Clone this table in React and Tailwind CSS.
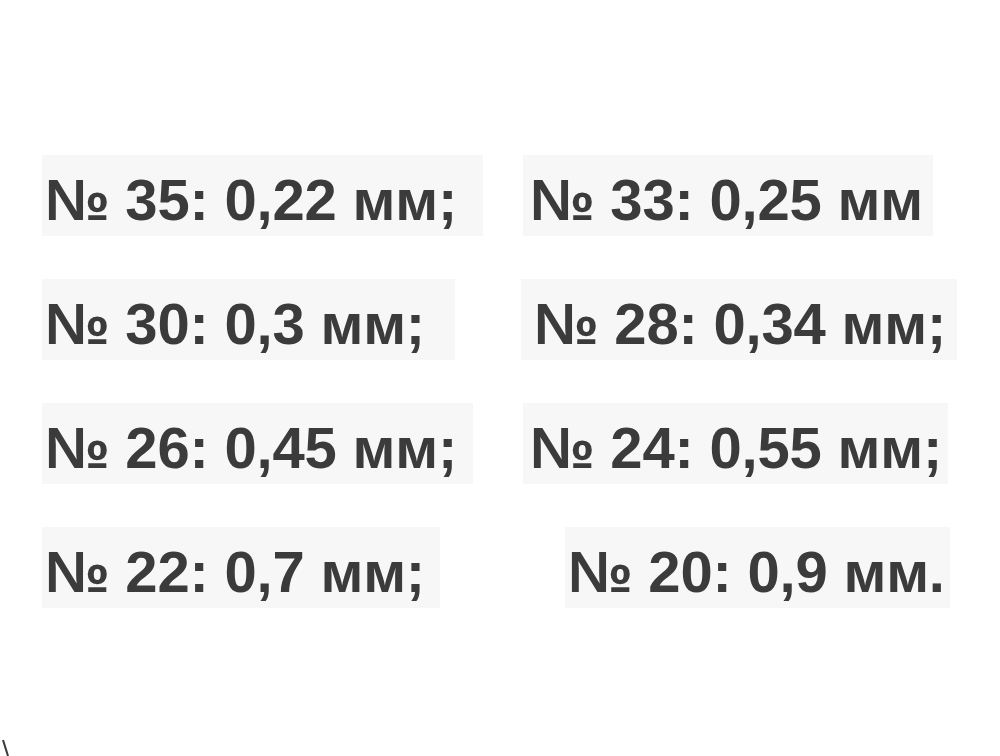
import React from 'react';

const rows = [
  {
    left: { text: '№ 35: 0,22 мм;', box: 'w-[438px]' },
    right: { text: '№ 33: 0,25 мм', box: 'ml-[40px] w-[410px] pl-[7px]' },
  },
  {
    left: { text: '№ 30: 0,3 мм;', box: 'w-[410px]' },
    right: { text: '№ 28: 0,34 мм;', box: 'ml-[66px] w-[436px] pl-[13px]' },
  },
  {
    left: { text: '№ 26: 0,45 мм;', box: 'w-[428px]' },
    right: { text: '№ 24: 0,55 мм;', box: 'ml-[50px] w-[425px] pl-[7px]' },
  },
  {
    left: { text: '№ 22: 0,7 мм;', box: 'w-[395px]' },
    right: { text: '№ 20: 0,9 мм.', box: 'ml-[125px] w-[385px] pl-[3px]' },
  },
];

const Cell = ({ text, box }) => (
  <div className={`${box} h-[81px] bg-[#f7f7f7] pt-[16px] pb-[7px] shrink-0`}>
    <span className="block text-[58px] leading-none font-bold text-[#3b3b3b] whitespace-nowrap tracking-[-0.2px]">
      {text}
    </span>
  </div>
);

export default function App() {
  return (
    <div
      className="relative w-[1000px] h-[756px] bg-white overflow-hidden"
      style={{ fontFamily: '"Liberation Sans", Arial, sans-serif' }}
    >
      <div className="flex flex-col gap-[43px] pt-[155px] pl-[42px]">
        {rows.map((r, i) => (
          <div key={i} className="flex">
            <div className="pl-[3px] shrink-0 bg-[#f7f7f7]">
              <Cell text={r.left.text} box={r.left.box} />
            </div>
            <Cell text={r.right.text} box={r.right.box} />
          </div>
        ))}
      </div>
      <svg className="absolute left-0 top-[738px]" width="12" height="18" viewBox="0 0 12 18">
        <path d="M3 2 L8 18" stroke="#3b3b3b" strokeWidth="2" />
      </svg>
    </div>
  );
}
